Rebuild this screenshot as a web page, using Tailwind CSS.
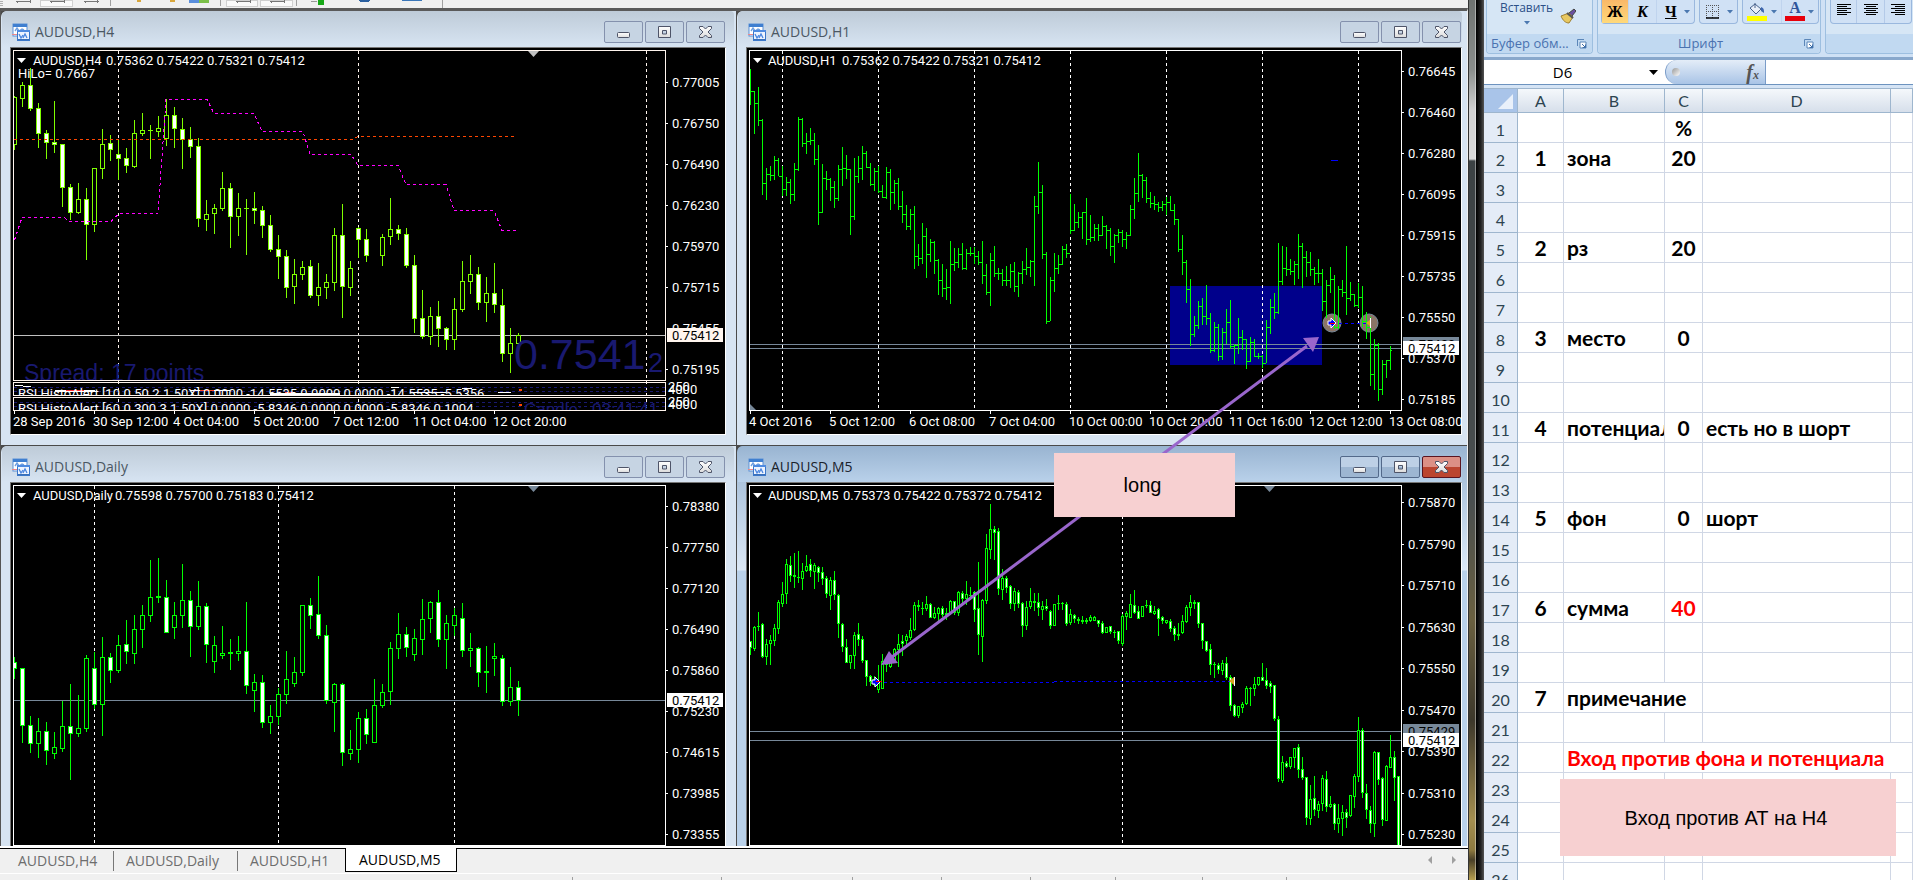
<!DOCTYPE html>
<html lang="ru">
<head>
<meta charset="utf-8">
<title>AUDUSD</title>
<script src="https://cdn.jsdelivr.net/npm/@tailwindcss/browser@4"></script>
</head>
<body class="h-screen overflow-hidden bg-[#f0f0f0] font-['Open_Sans','Noto_Sans',sans-serif]">

<svg class="absolute size-0" aria-hidden="true">
  <defs>
    <linearGradient id="btnGlyph" x1="0" y1="0" x2="0" y2="1"><stop offset="0" stop-color="#fff"/><stop offset="1" stop-color="#dcdcdc"/></linearGradient>
    <symbol id="i-chart" viewBox="0 0 18 18">
      <rect x="1" y="1" width="14" height="12" fill="#fff" stroke="#5b8fd6"/><path d="M1 1h14v3H1z" fill="#3f7fd0"/>
      <path d="M3 8l2-3 2 3 3-2 2 1" stroke="#6f9fe0" stroke-width="1.4" fill="none"/><path d="M0 11.5h5" stroke="#e88" />
      <rect x="5.500" y="7.500" width="12" height="10" fill="#eef4ff" stroke="#3a76c8"/><path d="M5 7h13v2H5z" fill="#4f8be0"/>
      <path d="M7 11l2 4 2-3M11 15l2-4 2 4" stroke="#4a86e0" stroke-width="1.3" fill="none"/><path d="M6 16.500h11" stroke="#3a70b8"/>
    </symbol>
    <symbol id="i-min" viewBox="0 0 39 22"><rect x="13.500" y="11.500" width="12" height="5" rx="1" fill="url(#btnGlyph)" stroke="#4e5468"/></symbol>
    <symbol id="i-max" viewBox="0 0 39 22"><path fill-rule="evenodd" d="M13.500 5.500h12v11h-12zM17.500 9.500v3.500h4v-3.500z" fill="url(#btnGlyph)" stroke="#4e5468"/></symbol>
    <symbol id="i-close" viewBox="0 0 39 22"><path d="M13.500 5.500h3.500l2.500 2.500 2.500-2.500h3.500v2l-3.500 3.500 3.500 3.500v2h-3.500l-2.500-2.500-2.500 2.500h-3.500v-2l3.500-3.500-3.500-3.500z" fill="url(#btnGlyph)" stroke="#4e5468"/></symbol>
    <symbol id="i-launch" viewBox="0 0 10 10"><path d="M.5 7V.5H7" fill="none" stroke="#5b86b8"/><path d="M3 3h6v6H3z" fill="#fff" stroke="#5b86b8"/><path d="M5 5l3.500 3.500M8.500 5.500v3h-3" stroke="#3f6fa8" fill="none"/></symbol>
    <symbol id="i-drop" viewBox="0 0 6 4"><path d="M0 0h6L3 3.500z" fill="#4b78b0"/></symbol>
  </defs>
</svg>

<div class="flex h-full">
  <!-- Trading terminal -->
  <div class="relative flex min-w-0 flex-1 flex-col">
    <div class="h-2 shrink-0 overflow-hidden bg-[#f0f0f0]" role="toolbar" aria-label="Charts">
      <svg class="h-2 w-full" viewBox="0 0 1468 8" preserveAspectRatio="xMinYMin slice" shape-rendering="crispEdges">
        <path d="M40 0h32v6H40zM226 0h31v6h-31zM260 0h32v6h-32z" fill="#fafafa" stroke="#d0d0d0"/>
        <path d="M110.500 0v6M220.500 0v6M296.500 0v6M442.500 0v8" stroke="#a0a0a0"/>
        <path d="M0 1.500h3M0 3.500h3M0 5.500h3" stroke="#b0b0b0"/>
        <path d="M16 1h15M17 1v2M30 0v3M50 1h15M51 1v2M64 0v3M84 1h15M85 1v2M97 0v3M236 1h14M237 1v2M250 0v3M270 1h14M271 1v2M284 0v3" stroke="#777"/>
        <path d="M137 0h4v2h-4zM170 0h5v2h-5z" fill="#d9a73c"/>
        <path d="M189 0h10v3h-10z" fill="#5a8edc"/><path d="M199 0h10v3h-10z" fill="#7cc04a"/>
        <path d="M318 0h6v5h-6z" fill="#18a818"/><path d="M311 1h6" stroke="#999"/>
        <path d="M358 0h13l-3 2h-7z" fill="#2a5f9f"/><path d="M402 0h20v1h-20z" fill="#3a76b8"/>
      </svg>
    </div>
    <main class="grid min-h-0 flex-1 grid-cols-[735fr_730fr] grid-rows-[434px_minmax(0,1fr)] gap-px overflow-hidden border-t-3 border-r border-l border-t-[#5a5a5a] border-r-[#f0f0f0] border-l-[#555] bg-[#4a4a4a]">

      <section class="flex flex-col overflow-hidden rounded-tl-md bg-[#d7e4f2] pb-2.5 pr-2.5 pl-[9px]">
        <header class="-mx-2 flex h-9 shrink-0 items-start justify-between rounded-t bg-linear-to-b from-[#becbd8] to-[#d7e4f2] pt-2.5 pr-[9px] pl-2.5">
          <h2 class="flex h-[22px] items-center gap-[5px] text-sm text-[#4b5763]"><svg class="size-[18px]"><use href="#i-chart"/></svg>AUDUSD,H4</h2>
          <div class="flex gap-0.5">
            <button class="h-[22px] w-[39px] rounded-xs border border-[#8491ad] bg-[#c6d4e3]" aria-label="Minimize"><svg class="-m-px h-[22px] w-[39px]"><use href="#i-min"/></svg></button>
            <button class="h-[22px] w-[39px] rounded-xs border border-[#8491ad] bg-[#c6d4e3]" aria-label="Maximize"><svg class="-m-px h-[22px] w-[39px]"><use href="#i-max"/></svg></button>
            <button class="h-[22px] w-[39px] rounded-xs border border-[#8491ad] bg-[#c6d4e3]" aria-label="Close"><svg class="-m-px h-[22px] w-[39px]"><use href="#i-close"/></svg></button>
          </div>
        </header>
        <div class="min-h-0 flex-1 border border-t-[#777] border-r-white border-b-white border-l-[#777] bg-black">
          <svg id="h4" class="block h-full w-full font-['Roboto','Open_Sans',sans-serif] text-[13px]" viewBox="11 48 714 386" preserveAspectRatio="xMinYMin slice" role="img" aria-label="AUDUSD H4"></svg>
        </div>
      </section>

      <section class="flex flex-col overflow-hidden rounded-tl-md bg-[#d7e4f2] pb-2.5 pr-[5px] pl-[9px]">
        <header class="-ml-2 flex h-9 shrink-0 items-start justify-between rounded-t bg-linear-to-b from-[#becbd8] to-[#d7e4f2] pt-2.5 pr-px pl-2.5">
          <h2 class="flex h-[22px] items-center gap-[5px] text-sm text-[#4b5763]"><svg class="size-[18px]"><use href="#i-chart"/></svg>AUDUSD,H1</h2>
          <div class="flex gap-0.5">
            <button class="h-[22px] w-[39px] rounded-xs border border-[#8491ad] bg-[#c6d4e3]" aria-label="Minimize"><svg class="-m-px h-[22px] w-[39px]"><use href="#i-min"/></svg></button>
            <button class="h-[22px] w-[39px] rounded-xs border border-[#8491ad] bg-[#c6d4e3]" aria-label="Maximize"><svg class="-m-px h-[22px] w-[39px]"><use href="#i-max"/></svg></button>
            <button class="h-[22px] w-[39px] rounded-xs border border-[#8491ad] bg-[#c6d4e3]" aria-label="Close"><svg class="-m-px h-[22px] w-[39px]"><use href="#i-close"/></svg></button>
          </div>
        </header>
        <div class="min-h-0 flex-1 border border-t-[#777] border-r-white border-b-white border-l-[#777] bg-black">
          <svg id="h1" class="block h-full w-full font-['Roboto','Open_Sans',sans-serif] text-[13px]" viewBox="747 48 714 386" preserveAspectRatio="xMinYMin slice" role="img" aria-label="AUDUSD H1"></svg>
        </div>
      </section>

      <section class="flex flex-col overflow-hidden rounded-tl-md bg-[#d7e4f2] pr-2.5 pl-[9px]">
        <header class="-mx-2 flex h-9 shrink-0 items-start justify-between rounded-t bg-linear-to-b from-[#becbd8] to-[#d7e4f2] pt-2.5 pr-[9px] pl-2.5">
          <h2 class="flex h-[22px] items-center gap-[5px] text-sm text-[#4b5763]"><svg class="size-[18px]"><use href="#i-chart"/></svg>AUDUSD,Daily</h2>
          <div class="flex gap-0.5">
            <button class="h-[22px] w-[39px] rounded-xs border border-[#8491ad] bg-[#c6d4e3]" aria-label="Minimize"><svg class="-m-px h-[22px] w-[39px]"><use href="#i-min"/></svg></button>
            <button class="h-[22px] w-[39px] rounded-xs border border-[#8491ad] bg-[#c6d4e3]" aria-label="Maximize"><svg class="-m-px h-[22px] w-[39px]"><use href="#i-max"/></svg></button>
            <button class="h-[22px] w-[39px] rounded-xs border border-[#8491ad] bg-[#c6d4e3]" aria-label="Close"><svg class="-m-px h-[22px] w-[39px]"><use href="#i-close"/></svg></button>
          </div>
        </header>
        <div class="min-h-0 flex-1 border border-b-0 border-t-[#777] border-r-white border-l-[#777] bg-black">
          <svg id="d1" class="block h-full w-full font-['Roboto','Open_Sans',sans-serif] text-[13px]" viewBox="11 483 714 363" preserveAspectRatio="xMinYMin slice" role="img" aria-label="AUDUSD Daily"></svg>
        </div>
      </section>

      <section class="flex flex-col overflow-hidden rounded-tl-md bg-[linear-gradient(#9bb6d3_0,#dbe8f6_124px,#b9d1ea_125px)] pr-[5px] pl-[9px]">
        <header class="-ml-2 flex h-9 shrink-0 items-start justify-between rounded-t bg-linear-to-b from-[#99b4d1] to-[#b9d1ea] pt-2.5 pr-px pl-2.5">
          <h2 class="flex h-[22px] items-center gap-[5px] text-sm text-[#1a222c]"><svg class="size-[18px]"><use href="#i-chart"/></svg>AUDUSD,M5</h2>
          <div class="flex gap-0.5">
            <button class="h-[22px] w-[39px] rounded-xs border border-[#53698a] bg-linear-to-b from-[#bdd0e6] from-50% to-[#9db6d2] to-50%" aria-label="Minimize"><svg class="-m-px h-[22px] w-[39px]"><use href="#i-min"/></svg></button>
            <button class="h-[22px] w-[39px] rounded-xs border border-[#53698a] bg-linear-to-b from-[#bdd0e6] from-50% to-[#9db6d2] to-50%" aria-label="Maximize"><svg class="-m-px h-[22px] w-[39px]"><use href="#i-max"/></svg></button>
            <button class="h-[22px] w-[39px] rounded-xs border border-[#5a1420] bg-linear-to-b from-[#dc9086] from-50% to-[#bb4530] to-50%" aria-label="Close"><svg class="-m-px h-[22px] w-[39px]"><use href="#i-close"/></svg></button>
          </div>
        </header>
        <div class="min-h-0 flex-1 border border-b-0 border-t-[#777] border-r-white border-l-[#777] bg-black">
          <svg id="m5" class="block h-full w-full font-['Roboto','Open_Sans',sans-serif] text-[13px]" viewBox="747 483 714 363" preserveAspectRatio="xMinYMin slice" role="img" aria-label="AUDUSD M5"></svg>
        </div>
      </section>
    </main>

    <nav class="flex h-[27px] shrink-0 items-start border-t-2 border-t-white bg-[#f0f0f0] text-sm text-[#6d6d6d]">
      <div class="flex h-[25px] w-full items-start border-t border-black">
        <a href="#h4" class="mt-0.5 h-5 w-[114px] border-r border-[#777] pl-[18px] leading-[19px]">AUDUSD,H4</a>
        <a href="#d1" class="mt-0.5 h-5 w-[124px] border-r border-[#777] pl-3 leading-[19px]">AUDUSD,Daily</a>
        <a href="#h1" class="mt-0.5 h-5 w-[107px] pl-3 leading-[19px]">AUDUSD,H1</a>
        <a href="#m5" class="-mt-px h-6 w-28 border border-t-0 border-black bg-white pl-[13px] leading-6 text-black">AUDUSD,M5</a>
        <div class="mt-1.5 mr-2.5 ml-auto flex gap-4 text-[#a0a0a0]">
          <button aria-label="Scroll left"><svg class="h-2.5 w-2" viewBox="0 0 8 10"><path d="M6 1v8L2 5z" fill="currentColor"/></svg></button>
          <button aria-label="Scroll right"><svg class="h-2.5 w-2" viewBox="0 0 8 10"><path d="M2 1v8l4-4z" fill="currentColor"/></svg></button>
        </div>
      </div>
    </nav>
    <footer class="h-[7px] shrink-0 overflow-hidden border-t border-white bg-[#f0f0f0]">
      <svg class="h-1.5 w-full" viewBox="0 0 1468 6" preserveAspectRatio="xMinYMin slice"><path d="M572.500 3v3M721.500 3v3M852.500 3v3M941.500 3v3M1030.500 3v3M1115.500 3v3M1202.500 3v3M1286.500 3v3" stroke="#a0a0a0"/></svg>
    </footer>

    <!-- Callout pointing at both entries -->
    <svg class="pointer-events-none absolute inset-0 h-full w-full" viewBox="0 0 1468 880" preserveAspectRatio="xMinYMin slice">
      <path d="M1307 346L892 657" stroke="#9966cc" stroke-width="3"/>
      <path d="M1319 337l-16 1 10 14zM881 665l8-14 9 12z" fill="#9966cc"/>
    </svg>
    <div class="absolute top-[453px] left-[1054px] flex h-16 w-[181px] items-center justify-center bg-[#f7d0d1] pr-1 font-['Liberation_Sans',sans-serif] text-xl text-black">long</div>
  </div>

  <div class="flex w-4 shrink-0">
    <div class="w-2 border-r border-l border-[#333] border-r-white/40 bg-[linear-gradient(#6f7371_0,#8b8f8d_70px,#d2d2d2_110px,#dadada_159px,#3c4244_161px,#4a4f50_500px,#6a6040_620px,#3d382b_720px,#a58f50_820px,#8e7a40_850px,#4a4028_860px,#b8a050_880px)]"></div>
    <div class="w-2 bg-[linear-gradient(90deg,#000,#222_60%,#555)]"></div>
  </div>

  <!-- Spreadsheet -->
  <div class="flex w-[429px] shrink-0 flex-col overflow-hidden bg-[#d5e4f5]">
    <div class="flex h-[57px] shrink-0 gap-1 overflow-hidden bg-[#cfe1f5] pl-0.5 text-xs text-[#2b4f87]">
      <div class="flex h-[54px] w-[107px] shrink-0 flex-col rounded-b border border-t-0 border-[#9dbfe0] bg-[#d6e6f5]">
        <div class="flex h-[34px] items-start justify-between pr-4 pl-[13px]">
          <button class="flex flex-col items-center"><span class="leading-4">Вставить</span><svg class="mt-[5px] h-1 w-1.5"><use href="#i-drop"/></svg></button>
          <button class="mt-2" aria-label="Формат по образцу"><svg class="size-4" viewBox="0 0 16 16"><path d="M9 5l5-4 2 2-4 5z" fill="#6a4fa0" stroke="#444"/><path d="M1 8l8-3 4 4-4 6c-3 0-6-2-8-7z" fill="#e8c860" stroke="#a08030"/><path d="M7 5l6 5" stroke="#555" stroke-width="2"/></svg></button>
        </div>
        <div class="flex h-[19px] items-center justify-between rounded-b bg-[#c1d9f1] pr-[5px] pl-1 text-[13px] text-[#4a72b0]"><span>Буфер обм...</span><svg class="size-2.5"><use href="#i-launch"/></svg></div>
      </div>
      <div class="flex h-[54px] w-[224px] shrink-0 flex-col rounded-b border border-t-0 border-[#9dbfe0] bg-[#d6e6f5]">
        <div class="flex h-[34px] items-start gap-1 pl-[3px] font-['Liberation_Serif',serif] text-base font-bold text-black">
          <div class="flex h-6 rounded-b border border-t-0 border-[#9ab8de] bg-[#d0e1f5]">
            <button class="w-[26px] bg-linear-to-b from-[#f9b868] to-[#ffd97a] leading-5">Ж</button>
            <button class="w-7 border-l border-[#c0d4ee] italic leading-5">К</button>
            <button class="flex w-[38px] items-center justify-between border-l border-[#c0d4ee] pr-1 pl-2 leading-5"><span class="underline">Ч</span><svg class="h-1 w-1.5"><use href="#i-drop"/></svg></button>
          </div>
          <button class="flex h-6 w-[39px] items-center justify-between rounded-b border border-t-0 border-[#9ab8de] bg-[#d0e1f5] px-1" aria-label="Границы"><svg class="ml-0.5 size-3.5" viewBox="0 0 14 14"><path d="M.5 0v13M6.500 0v13M12.500 0v13M0 .5h13M0 6.500h13" stroke="#555" stroke-dasharray="1 1"/><path d="M0 13h13" stroke="#000" stroke-width="1.500"/></svg><svg class="h-1 w-1.5"><use href="#i-drop"/></svg></button>
          <div class="flex h-6 rounded-b border border-t-0 border-[#9ab8de] bg-[#d0e1f5]">
            <button class="flex w-[38px] items-center justify-between px-1" aria-label="Цвет заливки"><svg class="h-[18px] w-5" viewBox="0 0 20 18"><path d="M3 5l5-4 6 5-5 5z" fill="#e8eef8" stroke="#48628c"/><path d="M8 0v5" stroke="#48628c"/><path d="M14 4c3 1 3 3 3 6l-3-2z" fill="#3d67b0"/><path d="M0 13h20v5H0z" fill="#ff0"/></svg><svg class="h-1 w-1.5"><use href="#i-drop"/></svg></button>
            <button class="flex w-[37px] items-center justify-between border-l border-[#c0d4ee] pr-1 pl-[3px]" aria-label="Цвет текста"><span class="flex w-5 flex-col items-center text-[#2f549a]"><span class="-mt-0.5 h-4 leading-4">А</span><span class="h-[5px] w-5 bg-red-600"></span></span><svg class="h-1 w-1.5"><use href="#i-drop"/></svg></button>
          </div>
        </div>
        <div class="flex h-[19px] items-center justify-between rounded-b bg-[#c1d9f1] pr-1.5 text-[13px] text-[#4a72b0]"><span class="pl-20">Шрифт</span><svg class="size-2.5"><use href="#i-launch"/></svg></div>
      </div>
      <div class="flex h-[54px] flex-1 flex-col rounded-bl border border-t-0 border-r-0 border-[#9dbfe0] bg-[#d6e6f5]">
        <div class="flex h-[34px] items-start gap-1 overflow-hidden pl-1">
          <div class="flex h-6 shrink-0 divide-x divide-[#b4cae8] rounded-b border border-t-0 border-[#9ab8de] bg-[#d0e1f5] text-black">
            <button class="flex w-[26px] justify-center pt-1" aria-label="По левому краю"><svg class="h-3 w-3.5" viewBox="0 0 14 12" shape-rendering="crispEdges"><path d="M0 .5h14M0 2.500h10M0 4.500h14M0 6.500h10M0 8.500h14M0 10.500h10" stroke="#000"/></svg></button>
            <button class="flex w-7 justify-center pt-1" aria-label="По центру"><svg class="h-3 w-3.5" viewBox="0 0 14 12" shape-rendering="crispEdges"><path d="M0 .5h14M2 2.500h10M0 4.500h14M2 6.500h10M0 8.500h14M2 10.500h10" stroke="#000"/></svg></button>
            <button class="flex w-[26px] justify-center pt-1" aria-label="По правому краю"><svg class="h-3 w-3.5" viewBox="0 0 14 12" shape-rendering="crispEdges"><path d="M0 .5h14M4 2.500h10M0 4.500h14M4 6.500h10M0 8.500h14M4 10.500h10" stroke="#000"/></svg></button>
          </div>
        </div>
        <div class="h-[19px] rounded-bl bg-[#c1d9f1]"></div>
      </div>
    </div>
    <div class="flex h-7 shrink-0 border-t-3 border-b border-t-[#89a8cc] border-b-[#6d93bf] bg-white">
      <input aria-label="Имя ячейки" value="D6" class="w-[157px] text-center text-[15px] text-black outline-none">
      <button class="flex w-6 items-center justify-center" aria-label="Список имён"><svg class="h-[5px] w-[9px]" viewBox="0 0 9 5"><path d="M0 0h9L4.500 5z"/></svg></button>
      <div class="flex w-[101px] items-center justify-between rounded-l-full border-r border-l border-[#7a9cc8] bg-linear-to-b from-[#e4edf8] to-[#a9c4e6] pr-1.5 pl-1.5">
        <span class="size-2 rounded-full bg-linear-to-br from-[#999] to-white"></span>
        <button class="font-['Liberation_Serif',serif] text-xl font-bold leading-5 italic text-[#555]" aria-label="Вставить функцию">f<span class="text-xs">x</span></button>
      </div>
      <input aria-label="Строка формул" class="min-w-0 flex-1 px-1 text-sm outline-none">
    </div>
    <div class="relative mt-[3px] min-h-0 flex-1 overflow-hidden bg-white">
      <table class="w-full table-fixed border-separate border-spacing-0 font-['Lato','Open_Sans',sans-serif]">
        <colgroup><col class="w-[34px]"><col class="w-[46px]"><col class="w-[101px]"><col class="w-[38px]"><col class="w-[188px]"><col></colgroup>
        <thead>
          <tr class="h-[25px] bg-linear-to-b from-[#f6f9fc] to-[#d5deea] text-base text-[#2d4450] *:border-t *:border-r *:border-b *:border-[#9eb6ce] *:p-0 *:font-normal *:leading-[23px]">
            <th class="bg-[#a9c4e9]"><svg class="ml-auto h-[22px] w-5" viewBox="0 0 20 22"><path d="M16 4v15H1z" fill="#e9f0fa"/></svg></th>
            <th>A</th><th>B</th><th>C</th><th>D</th><th></th>
          </tr>
        </thead>
        <tbody id="sheet"></tbody>
      </table>
      <div class="absolute top-[691px] left-[76px] flex h-[77px] w-[336px] items-center justify-center bg-[#f7d0d1] pr-1 font-['Liberation_Sans',sans-serif] text-xl text-black">Вход против АТ на Н4</div>
    </div>
  </div>
</div>

<script>
const LIME = '#00ff00', CHART = '#7fff00';
const rect = (x, y, w, h, f) => `<rect x="${x}" y="${y}" width="${w}" height="${h}" fill="${f}"/>`;
const text = (x, y, s, f = '#fff', extra = '') => `<text x="${x}" y="${y}" fill="${f}" xml:space="preserve" style="white-space:pre" ${extra}>${s}</text>`;
const parse = s => s.trim().split(/\s+/).map(r => { const p = r.split(','); return [+p[0], +p[1], +p[2], +p[3], p[4]]; });

// Each candle: high, body top, body bottom, low, optional f for a falling (filled) body.
function candles(data, x0, step, half, color, pad) {
  return parse(data).map(([t, a, b, l, f], i) => {
    if (!t) return '';
    const x = x0 + step * i, h = b - a + pad;
    let s = rect(x, t, 1, l - t + pad, color) + rect(x - half, a, half * 2 + 1, Math.max(h, 1), color);
    if (h > 2) s += rect(x - half + 1, a + 1, half * 2 - 1, h - 2, f ? '#fff' : '#000');
    return s;
  }).join('');
}
// Each bar: high, low, close; it opens at the previous close.
function bars(data, x0, step, color) {
  let prev = null;
  return parse(data).map(([t, l, c], i) => {
    const x = x0 + step * i;
    const s = rect(x, t, 1, l - t, color) + rect(x + 1, c, 1, 1, color) + (prev ? rect(x - 2, prev, 2, 1, color) : '');
    prev = c;
    return s;
  }).join('');
}
const dashes = (xs, y1, y2, c) => xs.map(x => `<path d="M${x + .5} ${y1}V${y2}" stroke="${c}" stroke-dasharray="3 3"/>`).join('');
const ticks = (x, ys) => ys.map(y => rect(x, y, 2, 1, '#fff')).join('');
const prices = (x, list) => list.map(([y, s]) => text(x, y, s)).join('');
const frame = (l, t, r, b, c) => `<path d="M${l + .5} ${t + .5}H${r + .5}V${b + .5}H${l + .5}Z" fill="none" stroke="${c}"/>`;
const arrow = (x, y) => `<path d="M${x} ${y}h9l-4.500 5z" fill="#fff"/>`;
const mark = (x, y, c) => `<path d="M${x - 5} ${y}h11l-5.500 6z" fill="${c}"/>`;
const crisp = s => `<g shape-rendering="crispEdges">${s}</g>`;
const fill = (id, s) => document.getElementById(id).innerHTML = s;

const h4 = `96,97,144,149 82,85,98,106 68,85,108,110,f 103,108,133,147,f 130,133,142,158,f 101,142,144,152,f 144,144,187,206,f 184,187,212,219,f
183,199,212,213 188,199,224,259,f 168,168,224,231 129,144,168,178 135,143,149,160,f 140,154,158,179,f 148,158,165,172,f 120,133,166,167
113,130,133,135 125,130,130,158 116,128,131,136 99,115,138,145 107,115,128,147,f 118,129,139,168,f 127,139,146,157,f 138,146,218,226,f
200,214,219,230 204,208,213,233 172,188,208,210 183,188,216,247,f 193,208,216,235 199,208,208,254 192,208,210,223,f 206,210,225,237,f
215,225,249,251,f 235,249,256,278,f 250,256,287,297,f 259,274,286,303 261,267,274,279 260,266,295,297,f 263,287,295,305 274,282,287,298
228,235,282,290 204,235,286,317,f 261,268,287,295 227,228,239,257,f 229,239,255,261,f 0 234,237,255,265 198,229,236,244
225,229,233,239,f 228,234,265,267,f 255,265,318,332,f 290,318,336,338,f 307,316,336,344 301,316,328,346,f 327,328,339,349,f 298,309,339,349
261,281,309,311 255,274,281,293 267,274,302,309,f 277,293,302,321 263,293,304,312,f 289,305,353,361,f 328,343,353,372 333,335,343,343`;

const navyLines = [387, 391, 402, 406].map(y => `<path d="M14 ${y}.5H666" stroke="#191970" stroke-dasharray="3 3"/>`).join('');
fill('h4', `<defs><clipPath id="c0"><path d="M13 50h653v330H13z"/></clipPath><clipPath id="c1"><path d="M13 383h654v12H13z"/></clipPath><clipPath id="c2"><path d="M13 398h654v12H13z"/></clipPath><clipPath id="c3"><path d="M668 300h60v28h-60z"/></clipPath></defs>` +
  crisp(dashes([118, 358, 646], 51, 410, '#fff5ee') + rect(14, 335, 652, 1, '#c0c0c0') +
    `<g clip-path="url(#c0)">${candles(h4, 14, 8, 2, CHART, 1)}</g>` +
    `<path d="M14 139.500H352L358 136.500H516" fill="none" stroke="#ff4500" stroke-dasharray="3 3"/>
     <path d="M14.500 240L22 217.500H64L70 221.500H111L119 213.500H158L166 99.500H207L214 113.500H254L262 131.500H303L310 154.500H351L358 165.500H398L406 184.500H446L454 210.500H494L502 230.500H517" fill="none" stroke="#ff00ff" stroke-dasharray="3 3"/>` +
    navyLines + frame(13, 50, 665, 380, '#fff5ee') + frame(13, 382, 665, 395, '#fff5ee') + frame(13, 397, 665, 410, '#fff5ee') +
    ticks(666, [82, 123, 164, 205, 246, 287, 369]) + [0, 1, 2, 3, 4, 5, 6].map(i => rect(14 + 80 * i, 411, 1, 3, '#fff')).join('') +
    rect(15, 385, 8, 1, '#fff') + rect(23, 386, 8, 1, '#fff') + rect(55, 390, 40, 2, '#fff') + rect(66, 390, 18, 1, '#f33') + rect(190, 390, 40, 1, '#fff') + rect(200, 390, 14, 1, '#f42') + rect(270, 393, 70, 2, '#fff') + rect(285, 392, 10, 1, '#f53') +
    rect(391, 387, 8, 1, '#fff') + rect(410, 392, 36, 1, '#fff') + rect(462, 388, 10, 1, '#fff') + rect(498, 392, 13, 1, '#fff') + rect(519, 389, 3, 2, '#ff4500') + rect(519, 404, 3, 2, '#ff4500')) +
  arrow(17, 58) + mark(533, 51, '#c0c0c0') +
  text(33, 65, 'AUDUSD,H4') + text(106, 65, '0.75362 0.75422 0.75321 0.75412') + text(18, 78, 'HiLo= 0.7667') +
  `<g clip-path="url(#c0)" font-family="Liberation Sans, sans-serif">${text(24, 381, 'Spread: 17 points', '#191970', 'font-size="23"')}${text(514, 369, '0.7541', '#191970', 'font-size="43"')}${text(648, 372, '2', '#191970', 'font-size="27"')}</g>` +
  `<g clip-path="url(#c1)">${text(18, 398, 'RSI HistoAlert [10.0.50.2.1.50X] 0.0000 -14.5535 0.0000 0.0000 -14.5535 -5.5356')}</g>` +
  `<g clip-path="url(#c2)">${text(18, 413, 'RSI HistoAlert [60.0.300.3.1.50X] 0.0000 -5.8346 0.0000 0.0000 -5.8346 0.1004')}${text(524, 415, 'Candle:  03:41:41', '#191970', 'font-size="17" font-family="Liberation Sans, sans-serif"')}</g>` +
  prices(672, [[87, '0.77005'], [128, '0.76750'], [169, '0.76490'], [210, '0.76230'], [251, '0.75970'], [292, '0.75715'], [374, '0.75195']]) +
  `<g clip-path="url(#c3)">${text(672, 333, '0.75455')}</g>` + rect(667, 328, 56, 14, '#fff5ee') + text(672, 340, '0.75412', '#000') +
  [394, 409].map(y => text(668, y, '4000') + text(668, y - 3, '250')).join('') +
  [[13, '28 Sep 2016'], [93, '30 Sep 12:00'], [173, '4 Oct 04:00'], [253, '5 Oct 20:00'], [333, '7 Oct 12:00'], [413, '11 Oct 04:00'], [493, '12 Oct 20:00']].map(([x, s]) => text(x, 426, s)).join(''));

const h1 = `69,105,91 91,134,103 87,126,120 119,195,183 168,200,174 166,181,175 156,180,160 158,176,176 166,196,189 177,196,182 179,204,194 163,201,169
117,171,119 118,147,143 133,154,141 128,145,140 133,165,159 145,225,212 164,213,178 171,190,179 178,201,187 181,208,198 165,201,169 147,186,168
155,179,169 169,235,216 158,220,176 156,183,168 146,180,153 151,168,167 163,186,184 168,191,171 166,193,191 185,198,197 167,199,172 169,210,192
180,204,183 178,210,206 191,223,214 205,230,226 209,230,214 206,269,256 244,266,258 223,264,236 228,278,254 239,262,242 241,274,260 259,295,280
264,297,288 269,300,287 241,304,264 248,271,262 248,268,254 243,270,268 249,270,253 247,256,253 247,264,256 251,265,262 241,284,275 264,295,292
253,306,260 246,277,273 268,280,273 269,286,280 266,286,280 264,288,271 262,292,286 272,297,273 261,284,269 248,275,267 260,277,261 196,286,206
162,214,192 185,259,254 252,324,321 277,321,280 253,292,268 255,274,264 246,265,249 244,258,253 194,234,230 204,231,222 212,228,217 212,239,212
198,245,239 215,242,237 224,241,228 224,241,235 216,236,226 225,249,230 228,256,246 234,263,235 229,243,232 230,247,239 232,249,235 205,236,209
178,219,193 153,202,175 174,198,180 177,203,198 192,208,203 196,210,204 202,212,207 201,211,204 197,215,202 196,211,210 204,225,219 219,252,249
235,275,262 260,303,289 279,346,334 316,337,325 301,329,306 298,325,316 285,325,318 313,353,350 322,352,327 324,361,356 328,360,332 309,344,322
300,349,346 344,364,345 318,354,337 330,350,339 339,369,361 337,362,342 339,357,356 353,359,356 355,368,363 320,363,327 299,334,307 293,319,312
243,314,281 246,285,268 247,276,269 259,275,271 261,285,264 234,279,246 243,288,257 251,277,262 252,276,269 267,285,273 259,283,273 269,311,301
280,318,285 267,293,279 275,329,327 286,329,289 280,297,292 246,315,298 282,301,294 294,307,305 283,308,297 286,327,321 312,339,327 317,386,374
339,390,345 343,401,389 360,395,364 360,378,360 346,370,350`;
fill('h1', crisp(rect(1170, 286, 152, 79, '#00008b') + dashes([782, 878, 974, 1070, 1166, 1262, 1358], 51, 410, '#fff') +
    rect(750, 344, 652, 1, '#778899') + rect(750, 348, 652, 1, '#778899') + rect(1331, 160, 7, 1, '#0000ff') + frame(749, 50, 1401, 410, '#fff') +
    ticks(1402, [71, 112, 153, 194, 235, 276, 317, 358, 399]) + [0, 1, 2, 3, 4, 5, 6, 7, 8].map(i => rect(750 + 80 * i, 411, 1, 3, '#fff')).join('')) +
  `<g fill="#8b7567" stroke="#778899"><circle cx="1332" cy="323" r="9"/><circle cx="1369" cy="323" r="9"/></g>` +
  crisp(bars(h1, 750, 4, LIME)) +
  `<path d="M1333 323.500H1366" stroke="#0000ff" stroke-dasharray="3 3" shape-rendering="crispEdges"/>
   <path d="M1328 321h3v-3l5 5-5 5v-3h-3z" fill="#0000ff" stroke="#fff"/><path d="M1330 323.500h5" stroke="#f00"/>
   <path d="M1366 323l5-4v8z" fill="#daa520"/><path d="M1370.500 318v10" stroke="#fff"/><path d="M750 404v6h6z" fill="#778899"/>` +
  arrow(753, 58) + text(768, 65, 'AUDUSD,H1') + text(842, 65, '0.75362 0.75422 0.75321 0.75412') +
  prices(1408, [[76, '0.76645'], [117, '0.76460'], [158, '0.76280'], [199, '0.76095'], [240, '0.75915'], [281, '0.75735'], [322, '0.75550'], [363, '0.75370'], [404, '0.75185']]) +
  rect(1403, 337, 56, 14, '#778899') + text(1408, 349, '0.75429', '#000') + rect(1403, 341, 56, 14, '#fff') + text(1408, 353, '0.75412', '#000') +
  [[749, '4 Oct 2016'], [829, '5 Oct 12:00'], [909, '6 Oct 08:00'], [989, '7 Oct 04:00'], [1069, '10 Oct 00:00'], [1149, '10 Oct 20:00'], [1229, '11 Oct 16:00'], [1309, '12 Oct 12:00'], [1389, '13 Oct 08:00']].map(([x, s]) => text(x, 426, s)).join(''));

const d1 = `657,662,669,679,f 668,668,726,743,f 716,725,744,753,f 718,731,744,758 722,731,751,765,f 732,747,754,759 701,726,749,752 684,726,734,780,f
695,728,734,737 655,658,729,732 652,668,705,709,f 637,657,705,736 653,657,671,683,f 635,645,671,673 620,644,652,664,f 615,629,654,664
605,615,630,648 560,597,616,622 558,596,598,603 580,597,633,633,f 602,615,628,639 564,600,616,628 591,600,627,657,f 581,606,627,630
603,606,645,663,f 636,645,662,673 626,653,656,659 639,652,654,670 636,651,654,661 602,651,686,694,f 674,682,691,712 675,682,723,728,f
705,716,723,734 688,694,717,725 651,679,695,704 657,672,684,687 605,605,673,676 598,605,616,629,f 576,614,636,639,f 625,635,701,704,f
683,684,703,732 683,684,753,766,f 730,749,754,760 712,718,750,763 709,718,735,744,f 679,705,743,743 684,692,706,708 642,648,692,705
613,634,649,659 627,634,648,657,f 629,638,655,661 599,619,640,655 601,602,619,633 590,602,640,647,f 615,623,640,669 608,615,626,636
603,618,651,657,f 633,648,651,667 647,648,673,687,f 646,671,673,693 643,656,659,676 655,658,702,706,f 667,687,702,706 681,687,701,716,f`;
fill('d1', `<defs><clipPath id="c4"><path d="M13 485h653v360H13z"/></clipPath></defs>` +
  crisp(dashes([94, 278, 454], 486, 845, '#fff') + rect(14, 700, 652, 1, '#778899') + `<g clip-path="url(#c4)">${candles(d1, 14, 8, 2, LIME, 0)}</g>` +
    frame(13, 485, 665, 845, '#fff') + ticks(666, [506, 547, 588, 629, 670, 711, 752, 793, 834])) +
  arrow(17, 493) + mark(533, 486, '#778899') + text(33, 500, 'AUDUSD,Daily') + text(115, 500, '0.75598 0.75700 0.75183 0.75412') +
  prices(672, [[511, '0.78380'], [552, '0.77750'], [593, '0.77120'], [634, '0.76490'], [675, '0.75860'], [716, '0.75230'], [757, '0.74615'], [798, '0.73985'], [839, '0.73355']]) +
  rect(667, 693, 56, 14, '#fff') + text(672, 705, '0.75412', '#000'));

const m5 = `641,641,648,655,f 626,627,649,651 612,626,627,631 623,624,657,658,f 639,644,657,665 635,640,644,665 624,628,641,646 600,602,629,634
582,594,604,607 559,564,594,604 556,565,576,582,f 553,575,577,588 551,577,578,583 563,571,579,590 555,566,571,572 559,564,571,577,f
563,565,572,589 566,567,573,582,f 567,572,579,585,f 576,578,594,598,f 577,580,596,610 571,580,595,600,f 594,595,624,638,f 623,624,647,652,f
639,647,663,663,f 655,655,663,669 632,635,656,669 623,634,640,646,f 636,639,661,663,f 660,660,677,686,f 675,676,682,686,f 676,679,685,686
665,681,690,693 654,661,689,689 658,660,665,672 658,662,667,668 648,649,661,663 634,644,650,667 635,641,644,656,f 634,636,641,646
618,630,638,640 602,605,630,631 600,605,607,611 602,608,609,615 596,604,609,611 603,604,618,618,f 607,613,618,619 607,608,614,623
606,608,615,617,f 608,613,615,620 600,601,613,615 601,601,613,615,f 591,592,613,616 591,593,599,603,f 581,594,599,605 587,595,596,600
591,592,610,622,f 562,608,635,655,f 599,600,637,662 534,548,601,604 504,529,550,559 526,529,533,560,f 528,531,589,595,f 569,578,590,600
576,578,588,593,f 585,586,604,609,f 588,591,604,611 590,592,604,608,f 602,603,626,637,f 601,607,626,630 588,601,607,609 593,601,603,611
593,602,608,616,f 601,606,610,620 599,606,609,611,f 610,611,626,629,f 604,604,626,626 595,603,604,610 602,603,604,610 602,604,624,626,f
609,614,623,625 614,615,619,623,f 617,619,621,624 616,620,622,624 618,620,622,624 615,617,621,622 616,617,621,621 620,620,624,627,f
621,623,633,634,f 627,627,633,633 626,626,632,634,f 630,632,633,638 631,631,641,644,f 614,616,644,646 611,613,617,630 594,604,618,618
590,605,613,614,f 606,611,619,619,f 606,606,617,617 600,605,606,608 601,605,613,613,f 606,611,614,615 608,609,619,636,f 616,617,621,624,f
620,620,623,624 619,621,629,632,f 626,628,635,641,f 623,634,636,640 615,621,633,634 605,607,622,623 595,602,608,616 600,602,604,609
602,602,624,628,f 623,623,641,649,f 641,641,651,652,f 644,649,665,675,f 662,664,665,678 663,665,670,674,f 660,663,671,675 657,663,678,680,f
675,677,706,711,f 704,705,716,717,f 706,706,716,718 702,704,708,713 686,688,704,705 687,688,689,706 677,684,689,696 677,677,685,686
663,677,681,681,f 668,680,686,689,f 681,683,687,693,f 685,685,719,721,f 716,719,779,782,f 756,762,781,783 761,763,767,768,f 757,757,767,769
748,748,758,768 744,747,770,778,f 757,769,778,780,f 777,777,818,825,f 785,799,819,825 776,798,810,816,f 801,804,811,818 775,778,804,811
771,779,807,812,f 796,804,807,808 803,804,824,830,f 804,818,824,833 805,812,819,836 809,812,818,828,f 795,795,816,817 774,776,797,808
717,730,777,782 728,730,793,798,f 784,793,810,819,f 806,810,824,833,f 751,752,824,837 752,752,780,785,f 777,778,820,826,f 765,766,821,821
735,757,768,768 751,757,778,801,f 776,776,846,846,f`;
fill('m5', `<defs><clipPath id="c5"><path d="M749 485h653v361H749z"/></clipPath><clipPath id="c6"><path d="M1403 720h60v13h-60z"/></clipPath></defs>` +
  crisp(dashes([1122], 486, 845, '#fff') + rect(750, 731, 652, 1, '#778899') + rect(750, 740, 652, 1, '#778899') + `<g clip-path="url(#c5)">${candles(m5, 750, 4, 1, LIME, 0)}</g>` +
    frame(749, 485, 1401, 845, '#fff') + ticks(1402, [502, 544, 585, 627, 668, 710, 751, 793, 834]) +
    `<path d="M884 682.500H1054M1054 681.500H1230" stroke="#0000ff" stroke-dasharray="3 3"/>`) +
  `<path d="M872 680h3v-3l5 5-5 5v-3h-3z" fill="#0000ff" stroke="#fff"/><path d="M876 681.500h6" stroke="#f00"/>
   <path d="M1229 681l5-4v8z" fill="#daa520"/><path d="M1234.500 677v9" stroke="#fff" stroke-width="1"/>` +
  arrow(753, 493) + mark(1269, 486, '#778899') + text(768, 500, 'AUDUSD,M5') + text(843, 500, '0.75373 0.75422 0.75372 0.75412') +
  prices(1408, [[507, '0.75870'], [549, '0.75790'], [590, '0.75710'], [632, '0.75630'], [673, '0.75550'], [715, '0.75470'], [756, '0.75390'], [798, '0.75310'], [839, '0.75230']]) +
  rect(1403, 724, 56, 14, '#778899') + `<g clip-path="url(#c6)">${text(1408, 736, '0.75429', '#000')}</g>` + rect(1403, 733, 56, 14, '#fff') + text(1408, 745, '0.75412', '#000'));

// Worksheet: row number -> [A, B, C, D]
const cells = { 1: ['', '', '%', ''], 2: ['1', 'зона', '20', ''], 5: ['2', 'рз', '20', ''], 8: ['3', 'место', '0', ''], 11: ['4', 'потенциал', '0', 'есть но в шорт'], 14: ['5', 'фон', '0', 'шорт'], 17: ['6', 'сумма', '40', ''] };
let rows = '';
for (let r = 1; r <= 26; r++) {
  const c = cells[r] || ['', '', '', ''];
  let body = `<td class="text-center">${c[0]}</td><td class="overflow-hidden pl-[3px]">${c[1]}</td><td class="text-center ${r === 17 ? 'text-[#ff0000]' : ''}">${c[2]}</td><td class="pl-[3px]">${c[3]}</td><td></td>`;
  if (r === 20) body = '<td class="text-center">7</td><td colspan="2" class="pl-[3px]">примечание</td><td></td><td></td>';
  if (r === 22) body = '<td></td><td colspan="4" class="pl-[3px] text-[#ff0000]">Вход против фона и потенциала</td>';
  rows += `<tr class="h-[30px] text-[21px] font-bold whitespace-nowrap text-black *:border-r *:border-b *:border-[#d0d7e5] *:pt-px *:pb-0 *:leading-7"><th class="border-[#9eb6ce]! bg-[#e4ecf7] px-0 pt-[5px]! text-center text-base leading-6! font-normal text-[#2d4450]">${r}</th>${body}</tr>`;
}
document.getElementById('sheet').innerHTML = rows;
</script>
</body>
</html>
